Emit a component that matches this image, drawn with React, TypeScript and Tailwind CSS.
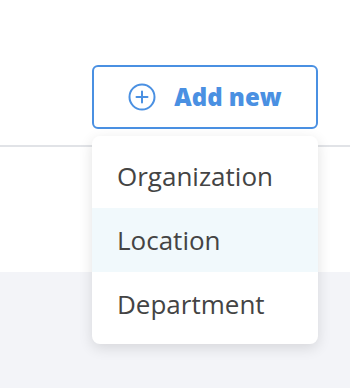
import { useState } from 'react';

const options = ['Organization', 'Location', 'Department'];

const PlusCircle = () => (
  <svg width="28" height="28" viewBox="0 0 28 28" fill="none" stroke="#4a90e2" strokeWidth="2" strokeLinecap="round">
    <circle cx="14" cy="14" r="12.5" />
    <path d="M14 8.5v11M8.5 14h11" />
  </svg>
);

export default function App() {
  const [hovered] = useState('Location');

  return (
    <div className="min-h-[388px] bg-[#f3f4f8] font-['Open_Sans',sans-serif]">
      <div className="bg-white">
        <div className="flex h-[147px] items-start justify-end border-b-2 border-[#e1e3e7] pr-[32px] pt-[65px]">
          <div className="relative">
            <button className="flex h-[64px] w-[226px] items-center justify-center gap-[18px] rounded-[6px] border-2 border-[#4a90e2] bg-white">
              <PlusCircle />
              <span className="text-[24px] font-extrabold text-[#4a90e2]">Add new</span>
            </button>
            <div className="absolute left-0 top-full z-10 mt-[7px] w-[226px] rounded-[8px] bg-white py-[8px] shadow-[0_4px_14px_rgba(0,0,0,0.12)]">
              {options.map((opt) => (
                <div
                  key={opt}
                  className={`flex h-[64px] items-center pl-[25px] text-[26px] text-[#444444] ${
                    opt === hovered ? 'bg-[#f1f9fc]' : ''
                  }`}
                >
                  {opt}
                </div>
              ))}
            </div>
          </div>
        </div>
        <div className="h-[125px]" />
      </div>
    </div>
  );
}
